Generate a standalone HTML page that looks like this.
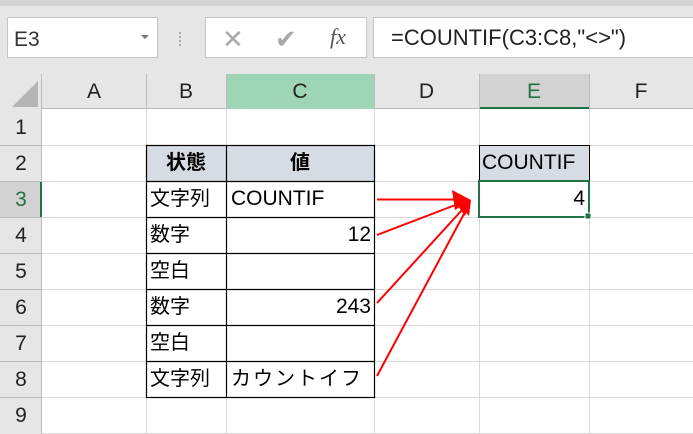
<!DOCTYPE html><html><head><meta charset="utf-8"><style>
*{margin:0;padding:0;box-sizing:border-box}
body{width:693px;height:434px;overflow:hidden;background:#fff;font-family:"Liberation Sans","Noto Sans CJK JP",sans-serif;position:relative}
.a{position:absolute}
.t{font-size:20px;color:#000;line-height:36px;white-space:nowrap}
.h{font-size:21px;color:#222;text-align:center;line-height:35px}
</style></head><body>
<div class="a" style="left:0;top:0;width:693px;height:74px;background:#e6e6e6"></div>
<div class="a" style="left:0;top:0;width:693px;height:6px;background:#d4d4d4"></div>
<div class="a" style="left:7px;top:17px;width:151px;height:41px;background:#fff;border:1px solid #c6c6c6"></div>
<div class="a t" style="left:14px;top:22px;font-size:21px;color:#333;line-height:36px">E3</div>
<div class="a" style="left:141px;top:35px;border-left:4px solid transparent;border-right:4px solid transparent;border-top:4px solid #777"></div>
<div class="a" style="left:179px;top:32px;width:3px;height:14px;border-left:2px dotted #aaa"></div>
<div class="a" style="left:205px;top:17px;width:162px;height:41px;background:#fff;border:1px solid #c6c6c6"></div>
<div class="a" style="left:222px;top:24px;font-size:26px;color:#aaa">✕</div>
<div class="a" style="left:275px;top:24px;font-size:26px;color:#aaa">✔</div>
<div class="a" style="left:330px;top:24px;font-size:22px;color:#555;font-family:'Liberation Serif',serif;font-style:italic">fx</div>
<div class="a" style="left:373px;top:17px;width:330px;height:41px;background:#fff;border:1px solid #c6c6c6"></div>
<div class="a t" style="left:391px;top:20px;color:#222;font-size:22px">=COUNTIF(C3:C8,"&lt;&gt;")</div>
<div class="a" style="left:0;top:74px;width:693px;height:35px;background:#e6e6e6;border-bottom:1px solid #bcbcbc"></div>
<div class="a" style="left:0;top:74px;width:42px;height:360px;background:#e6e6e6;border-right:1px solid #bcbcbc"></div>
<div class="a" style="left:12px;top:81px;border-left:26px solid transparent;border-bottom:26px solid #b4b4b4"></div>
<div class="a" style="left:226px;top:74px;width:148px;height:35px;background:#9fd5b7"></div>
<div class="a" style="left:479px;top:74px;width:110px;height:35px;background:#d2d2d2;border-bottom:2px solid #217346"></div>
<div class="a" style="left:0;top:181px;width:42px;height:36px;background:#d2d2d2;border-right:2px solid #217346"></div>
<div class="a h" style="left:42px;top:74px;width:104px">A</div>
<div class="a h" style="left:146px;top:74px;width:80px">B</div>
<div class="a h" style="left:226px;top:74px;width:148px">C</div>
<div class="a h" style="left:374px;top:74px;width:105px">D</div>
<div class="a h" style="left:479px;top:74px;width:110px;color:#217346">E</div>
<div class="a h" style="left:589px;top:74px;width:104px">F</div>
<svg class="a" style="left:0;top:0" width="693" height="434">
<g stroke="#bcbcbc" stroke-width="1">
<line x1="146.5" y1="74" x2="146.5" y2="109"/><line x1="226.5" y1="74" x2="226.5" y2="109"/><line x1="374.5" y1="74" x2="374.5" y2="109"/><line x1="479.5" y1="74" x2="479.5" y2="109"/><line x1="589.5" y1="74" x2="589.5" y2="109"/>
</g>
<g stroke="#d9d9d9" stroke-width="1">
<line x1="146.5" y1="109" x2="146.5" y2="434"/><line x1="226.5" y1="109" x2="226.5" y2="434"/><line x1="374.5" y1="109" x2="374.5" y2="434"/><line x1="479.5" y1="109" x2="479.5" y2="434"/><line x1="589.5" y1="109" x2="589.5" y2="434"/>
<line x1="42" y1="145.5" x2="693" y2="145.5"/><line x1="42" y1="181.5" x2="693" y2="181.5"/><line x1="42" y1="217.5" x2="693" y2="217.5"/><line x1="42" y1="253.5" x2="693" y2="253.5"/><line x1="42" y1="289.5" x2="693" y2="289.5"/><line x1="42" y1="325.5" x2="693" y2="325.5"/><line x1="42" y1="361.5" x2="693" y2="361.5"/><line x1="42" y1="397.5" x2="693" y2="397.5"/><line x1="42" y1="433.5" x2="693" y2="433.5"/>
</g>
<g stroke="#bcbcbc"><line x1="0" y1="145.5" x2="42" y2="145.5"/><line x1="0" y1="181.5" x2="42" y2="181.5"/><line x1="0" y1="217.5" x2="42" y2="217.5"/><line x1="0" y1="253.5" x2="42" y2="253.5"/><line x1="0" y1="289.5" x2="42" y2="289.5"/><line x1="0" y1="325.5" x2="42" y2="325.5"/><line x1="0" y1="361.5" x2="42" y2="361.5"/><line x1="0" y1="397.5" x2="42" y2="397.5"/></g>
<rect x="146.5" y="145.5" width="228" height="36" fill="#d6dce4"/>
<rect x="479.5" y="145.5" width="110" height="36" fill="#d6dce4" stroke="#000"/>
<g stroke="#000" stroke-width="1.2" fill="none">
<rect x="146.5" y="145.5" width="228" height="252"/>
<line x1="226.5" y1="145" x2="226.5" y2="398"/>
<line x1="146" y1="181.5" x2="375" y2="181.5"/><line x1="146" y1="217.5" x2="375" y2="217.5"/><line x1="146" y1="253.5" x2="375" y2="253.5"/><line x1="146" y1="289.5" x2="375" y2="289.5"/><line x1="146" y1="325.5" x2="375" y2="325.5"/><line x1="146" y1="361.5" x2="375" y2="361.5"/>
</g>
<rect x="479" y="181" width="110" height="36" fill="none" stroke="#217346" stroke-width="2"/>
<rect x="585" y="213" width="6" height="6" fill="#217346" stroke="#fff" stroke-width="1"/>
<g stroke="#f00" stroke-width="2" fill="#f00">
<line x1="377" y1="199.5" x2="458" y2="199.5"/>
<line x1="377" y1="235" x2="458" y2="204"/>
<line x1="377" y1="303" x2="462" y2="210"/>
<line x1="377" y1="376" x2="465" y2="212"/>
<polygon points="471,200 452,190 455,210" stroke="none"/>
<polygon points="471,200 455,202 465,216" stroke="none"/>
<polygon points="471,200 460,206 469,216" stroke="none"/>
</g>
</svg>
<div class="a h" style="left:0;top:110px;width:42px">1</div>
<div class="a h" style="left:0;top:146px;width:42px">2</div>
<div class="a h" style="left:0;top:182px;width:42px;color:#217346">3</div>
<div class="a h" style="left:0;top:218px;width:42px">4</div>
<div class="a h" style="left:0;top:254px;width:42px">5</div>
<div class="a h" style="left:0;top:290px;width:42px">6</div>
<div class="a h" style="left:0;top:326px;width:42px">7</div>
<div class="a h" style="left:0;top:362px;width:42px">8</div>
<div class="a h" style="left:0;top:398px;width:42px">9</div>
<div class="a t" style="left:146px;top:145px;width:80px;text-align:center;font-weight:bold">状態</div>
<div class="a t" style="left:226px;top:145px;width:148px;text-align:center;font-weight:bold">値</div>
<div class="a t" style="left:150px;top:181px">文字列</div>
<div class="a t" style="left:150px;top:217px">数字</div>
<div class="a t" style="left:150px;top:253px">空白</div>
<div class="a t" style="left:150px;top:289px">数字</div>
<div class="a t" style="left:150px;top:325px">空白</div>
<div class="a t" style="left:150px;top:361px">文字列</div>
<div class="a t" style="left:231px;top:181px;font-size:21px">COUNTIF</div>
<div class="a t" style="left:226px;top:217px;width:145px;text-align:right;font-size:21px">12</div>
<div class="a t" style="left:226px;top:289px;width:145px;text-align:right;font-size:21px">243</div>
<div class="a t" style="left:231px;top:361px;letter-spacing:2px">カウントイフ</div>
<div class="a t" style="left:482px;top:145px;font-size:21px">COUNTIF</div>
<div class="a t" style="left:479px;top:181px;width:106px;text-align:right;font-size:21px">4</div>
</body></html>
